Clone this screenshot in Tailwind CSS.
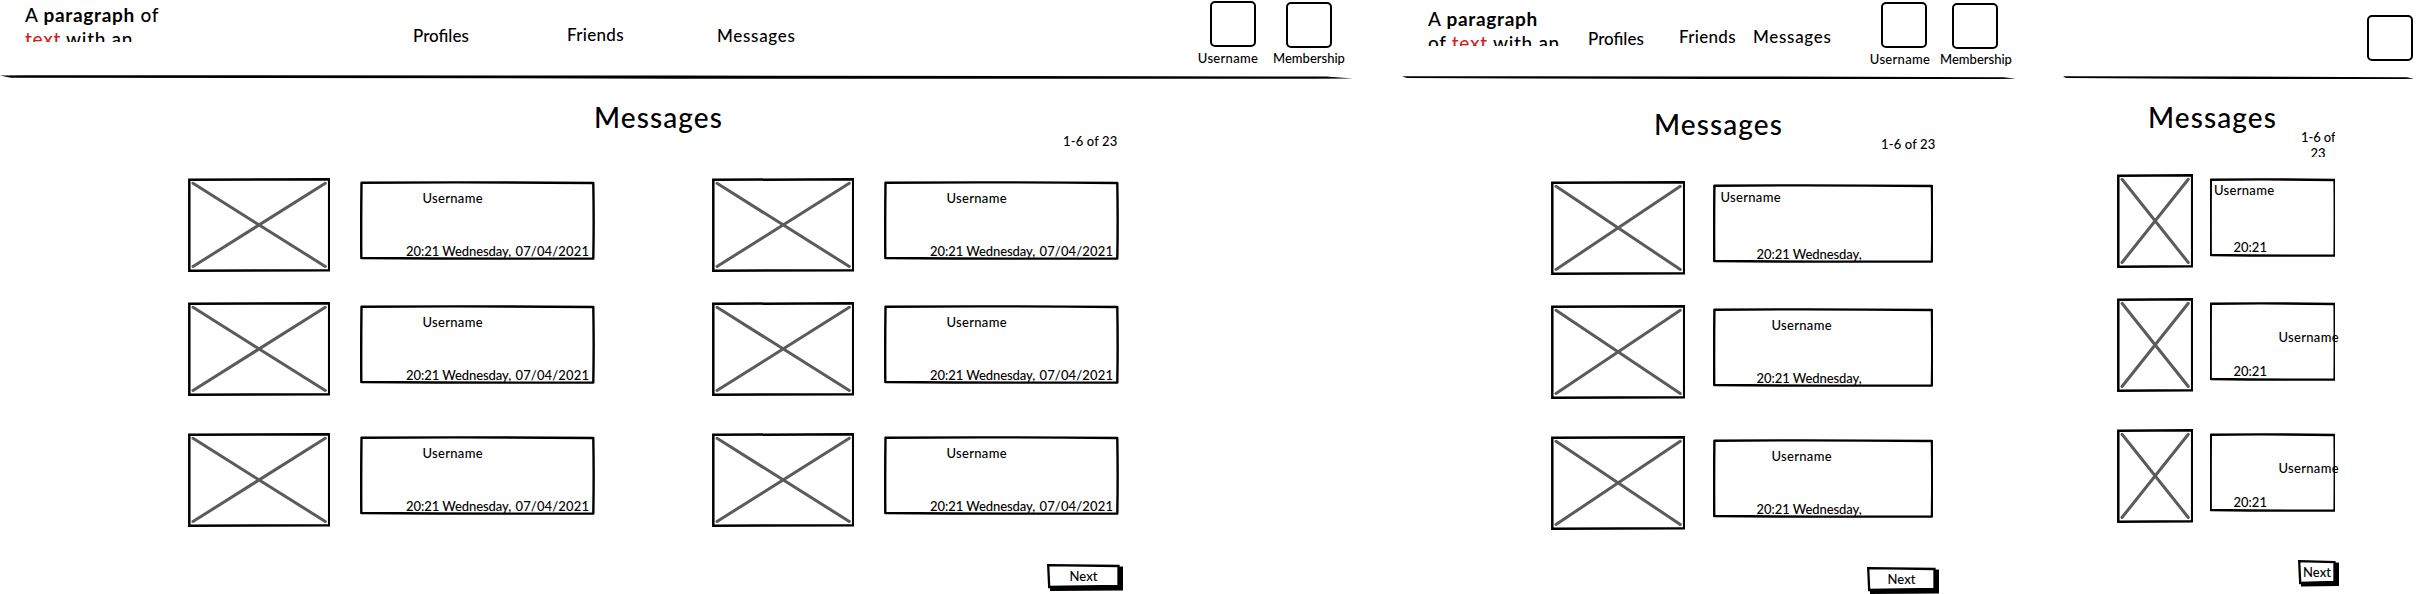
<!DOCTYPE html>
<html lang="en">
<head>
<meta charset="utf-8">
<title>Messages</title>
<script src="https://cdn.jsdelivr.net/npm/@tailwindcss/browser@4"></script>
</head>
<body class="w-[2427px] h-[594px] overflow-hidden bg-white text-black font-['Lato',sans-serif] font-medium whitespace-nowrap text-[13px] leading-4">
<svg class="hidden">
  <symbol id="img-lg" viewBox="0 0 142.5 94"><path d="M1.300 1.800L141.200 1.300V92.200L1.300 92.700Z" fill="#fff" stroke="#000" stroke-width="2.500"/><path d="M5 5.300L137.300 88.500M137.300 5.300L5 88.500" stroke="#5b5b5b" stroke-width="3" stroke-linecap="round"/></symbol>
  <symbol id="img-md" viewBox="0 0 134.500 94"><path d="M1.300 1.800L133.200 1.300V92.200L1.300 92.700Z" fill="#fff" stroke="#000" stroke-width="2.500"/><path d="M5 5.300L129.300 88.500M129.300 5.300L5 88.500" stroke="#5b5b5b" stroke-width="3" stroke-linecap="round"/></symbol>
  <symbol id="img-sm" viewBox="0 0 76.500 94"><path d="M1.300 1.800L75.200 1.300V92.200L1.300 92.700Z" fill="#fff" stroke="#000" stroke-width="2.500"/><path d="M5 5.300L71.300 88.500M71.300 5.300L5 88.500" stroke="#5b5b5b" stroke-width="3" stroke-linecap="round"/></symbol>
  <symbol id="box" viewBox="0 0 235 79" preserveAspectRatio="none"><path vector-effect="non-scaling-stroke" d="M1.500 1.700Q110 .9 233.300 2Q234 40 233.300 77.500Q120 78 1.300 77Q1 40 1.500 1.700Z" fill="none" stroke="#000" stroke-width="2.400" stroke-linejoin="round"/></symbol>
  <symbol id="rule" viewBox="0 0 1000 4" preserveAspectRatio="none"><path d="M0 .3L20 .2L500 .4L980 1.200L1000 2.800L970 2.900L500 2.900L8 2.100Z"/></symbol>
</svg>
<div class="flex items-start">

  <!-- Desktop -->
  <section class="w-[1402px] shrink-0">
    <header>
      <div class="flex items-start h-[75px]">
        <p class="ml-[25px] mt-[3px] w-[150px] h-[39px] overflow-hidden text-[19px] leading-6 tracking-[0.700px]">A <b>paragraph</b> of<br><span class="text-[#d32020]">text</span> with an</p>
        <nav class="flex text-[17px] leading-5">
          <a class="ml-[238px] mt-[26px] w-[58px]">Profiles</a>
          <a class="ml-[96px] mt-[25px] w-[58px] tracking-[0.300px]">Friends</a>
          <a class="ml-[92px] mt-[26px] w-[80px] tracking-[0.700px]">Messages</a>
        </nav>
        <div class="ml-[399px] mt-px w-[64px] flex flex-col items-center"><div class="ml-[9px] size-[46px] border-2 rounded-[5px]"></div><span class="mt-[3px] tracking-[0.300px]">Username</span></div>
        <div class="ml-[11px] mt-[2px] w-[76px] flex flex-col items-center"><div class="size-[46px] border-2 rounded-[5px]"></div><span class="mt-[2px]">Membership</span></div>
      </div>
      <svg class="w-[1353px] h-[5px]"><use href="#rule"/></svg>
    </header>
    <div class="flex items-start h-[98px]">
      <h1 class="ml-[594px] mt-[21px] w-[131px] text-[28px] leading-8 tracking-[1.100px]">Messages</h1>
      <span class="ml-[338px] mt-[53px] tracking-[0.150px]">1-6 of 23</span>
    </div>
    <div class="ml-[187.500px] grid grid-cols-[524px_524px] grid-rows-[124px_131px_94px]">
      <article class="flex items-start"><svg class="w-[142.500px] h-[94px]"><use href="#img-lg"/></svg><div class="relative ml-[29.500px] mt-[3px] w-[235px] h-[79px] flex flex-col"><svg class="absolute inset-0 size-full"><use href="#box"/></svg><span class="ml-[63px] mt-[9px] tracking-[0.300px]">Username</span><span class="ml-[46.500px] mt-[37px] tracking-[-0.060px]">20:21 Wednesday, <span class="ml-px tracking-[0.150px]">07/04/2021</span></span></div></article>
      <article class="flex items-start"><svg class="w-[142.500px] h-[94px]"><use href="#img-lg"/></svg><div class="relative ml-[29.500px] mt-[3px] w-[235px] h-[79px] flex flex-col"><svg class="absolute inset-0 size-full"><use href="#box"/></svg><span class="ml-[63px] mt-[9px] tracking-[0.300px]">Username</span><span class="ml-[46.500px] mt-[37px] tracking-[-0.060px]">20:21 Wednesday, <span class="ml-px tracking-[0.150px]">07/04/2021</span></span></div></article>
      <article class="flex items-start"><svg class="w-[142.500px] h-[94px]"><use href="#img-lg"/></svg><div class="relative ml-[29.500px] mt-[3px] w-[235px] h-[79px] flex flex-col"><svg class="absolute inset-0 size-full"><use href="#box"/></svg><span class="ml-[63px] mt-[9px] tracking-[0.300px]">Username</span><span class="ml-[46.500px] mt-[37px] tracking-[-0.060px]">20:21 Wednesday, <span class="ml-px tracking-[0.150px]">07/04/2021</span></span></div></article>
      <article class="flex items-start"><svg class="w-[142.500px] h-[94px]"><use href="#img-lg"/></svg><div class="relative ml-[29.500px] mt-[3px] w-[235px] h-[79px] flex flex-col"><svg class="absolute inset-0 size-full"><use href="#box"/></svg><span class="ml-[63px] mt-[9px] tracking-[0.300px]">Username</span><span class="ml-[46.500px] mt-[37px] tracking-[-0.060px]">20:21 Wednesday, <span class="ml-px tracking-[0.150px]">07/04/2021</span></span></div></article>
      <article class="flex items-start"><svg class="w-[142.500px] h-[94px]"><use href="#img-lg"/></svg><div class="relative ml-[29.500px] mt-[3px] w-[235px] h-[79px] flex flex-col"><svg class="absolute inset-0 size-full"><use href="#box"/></svg><span class="ml-[63px] mt-[9px] tracking-[0.300px]">Username</span><span class="ml-[46.500px] mt-[37px] tracking-[-0.060px]">20:21 Wednesday, <span class="ml-px tracking-[0.150px]">07/04/2021</span></span></div></article>
      <article class="flex items-start"><svg class="w-[142.500px] h-[94px]"><use href="#img-lg"/></svg><div class="relative ml-[29.500px] mt-[3px] w-[235px] h-[79px] flex flex-col"><svg class="absolute inset-0 size-full"><use href="#box"/></svg><span class="ml-[63px] mt-[9px] tracking-[0.300px]">Username</span><span class="ml-[46.500px] mt-[37px] tracking-[-0.060px]">20:21 Wednesday, <span class="ml-px tracking-[0.150px]">07/04/2021</span></span></div></article>
    </div>
    <button class="relative block ml-[1047px] mt-[37px] w-[76px] h-[27px] pr-[3px] pb-[3px] text-center"><svg class="absolute inset-0" width="76" height="27"><path d="M3 4L76 2.500V26.500L3 27Z"/><path d="M1.200 1.200L71.500 2V22L2.200 23Z" fill="#fff" stroke="#000" stroke-width="2.300"/></svg><span class="relative">Next</span></button>
  </section>

  <!-- Tablet -->
  <section class="w-[661px] shrink-0">
    <header>
      <div class="flex items-start h-[76px]">
        <p class="ml-[26px] mt-[7px] w-[135px] h-[39px] overflow-hidden text-[19px] leading-6 tracking-[0.700px]">A <b>paragraph</b><br>of <span class="text-[#d32020]">text</span> with an</p>
        <nav class="flex text-[17px] leading-5">
          <a class="ml-[25px] mt-[29px] w-[58px]">Profiles</a>
          <a class="ml-[33px] mt-[27px] w-[58px] tracking-[0.300px]">Friends</a>
          <a class="ml-[16px] mt-[27px] w-[80px] tracking-[0.700px]">Messages</a>
        </nav>
        <div class="ml-[36px] mt-[2px] w-[62px] flex flex-col items-center"><div class="ml-[7px] size-[46px] border-2 rounded-[5px]"></div><span class="mt-[3px] tracking-[0.300px]">Username</span></div>
        <div class="ml-[9px] mt-[3px] w-[72px] flex flex-col items-center"><div class="mr-[2px] size-[46px] border-2 rounded-[5px]"></div><span class="mt-[2px]">Membership</span></div>
      </div>
      <svg class="w-[614px] h-[4px]"><use href="#rule"/></svg>
    </header>
    <div class="flex items-start h-[101px]">
      <h1 class="ml-[252px] mt-[28px] w-[131px] text-[28px] leading-8 tracking-[1.100px]">Messages</h1>
      <span class="ml-[96px] mt-[56px] tracking-[0.150px]">1-6 of 23</span>
    </div>
    <div class="ml-[148.500px] grid grid-rows-[124px_131px_94px]">
      <article class="flex items-start"><svg class="w-[134.500px] h-[94px]"><use href="#img-md"/></svg><div class="relative ml-[27.500px] mt-[3px] w-[220.500px] h-[79px] flex flex-col"><svg class="absolute inset-0 size-full"><use href="#box"/></svg><span class="ml-[8px] mt-[5px] tracking-[0.300px]">Username</span><span class="ml-[44px] mt-[41px] tracking-[-0.060px]">20:21 Wednesday,</span></div></article>
      <article class="flex items-start"><svg class="w-[134.500px] h-[94px]"><use href="#img-md"/></svg><div class="relative ml-[27.500px] mt-[3px] w-[220.500px] h-[79px] flex flex-col"><svg class="absolute inset-0 size-full"><use href="#box"/></svg><span class="ml-[59px] mt-[9px] tracking-[0.300px]">Username</span><span class="ml-[44px] mt-[37px] tracking-[-0.060px]">20:21 Wednesday,</span></div></article>
      <article class="flex items-start"><svg class="w-[134.500px] h-[94px]"><use href="#img-md"/></svg><div class="relative ml-[27.500px] mt-[3px] w-[220.500px] h-[79px] flex flex-col"><svg class="absolute inset-0 size-full"><use href="#box"/></svg><span class="ml-[59px] mt-[9px] tracking-[0.300px]">Username</span><span class="ml-[44px] mt-[37px] tracking-[-0.060px]">20:21 Wednesday,</span></div></article>
    </div>
    <button class="relative block ml-[465px] mt-[37px] w-[72px] h-[27px] pr-[3px] pb-[3px] text-center"><svg class="absolute inset-0" width="72" height="27"><path d="M3 4L72 2.500V26.500L3 27Z"/><path d="M1.200 1.200L67.500 2V22L2.200 23Z" fill="#fff" stroke="#000" stroke-width="2.300"/></svg><span class="relative">Next</span></button>
  </section>

  <!-- Mobile -->
  <section class="w-[364px] shrink-0">
    <header>
      <div class="flex items-start h-[76px]"><div class="ml-[304px] mt-[15px] size-[46px] border-2 rounded-[5px]"></div></div>
      <svg class="w-[351px] h-[4px]"><use href="#rule"/></svg>
    </header>
    <div class="flex items-start h-[94px]">
      <h1 class="ml-[85px] mt-[21px] w-[131px] text-[28px] leading-8 tracking-[1.100px]">Messages</h1>
      <span class="ml-[22px] mt-[49px] w-[34px] h-[28px] overflow-hidden leading-4 tracking-[-0.100px] text-center">1-6 of<br>23</span>
    </div>
    <div class="ml-[53.500px] grid grid-rows-[124px_131px_94px]">
      <article class="flex items-start"><svg class="w-[76.500px] h-[94px]"><use href="#img-sm"/></svg><div class="relative ml-[16.500px] mt-[3.500px] w-[125.500px] h-[79px] flex flex-col"><svg class="absolute inset-0 size-full"><use href="#box"/></svg><span class="ml-[4.500px] mt-[4.500px] tracking-[0.300px]">Username</span><span class="ml-[24px] mt-[41px]">20:21</span></div></article>
      <article class="flex items-start"><svg class="w-[76.500px] h-[94px]"><use href="#img-sm"/></svg><div class="relative ml-[16.500px] mt-[3.500px] w-[125.500px] h-[79px] flex flex-col"><svg class="absolute inset-0 size-full"><use href="#box"/></svg><span class="ml-[69px] mt-[27.500px] tracking-[0.300px]">Username</span><span class="ml-[24px] mt-[18px]">20:21</span></div></article>
      <article class="flex items-start"><svg class="w-[76.500px] h-[94px]"><use href="#img-sm"/></svg><div class="relative ml-[16.500px] mt-[3.500px] w-[125.500px] h-[79px] flex flex-col"><svg class="absolute inset-0 size-full"><use href="#box"/></svg><span class="ml-[69px] mt-[27.500px] tracking-[0.300px]">Username</span><span class="ml-[24px] mt-[18px]">20:21</span></div></article>
    </div>
    <button class="relative block ml-[235px] mt-[37px] w-[41px] h-[27px] pr-[3px] pb-[3px] text-center"><svg class="absolute inset-0" width="41" height="27"><path d="M3 4L41 2.500V26L3 26.500Z"/><path d="M1.200 1.200L36.500 2V22L2.200 23Z" fill="#fff" stroke="#000" stroke-width="2.300"/></svg><span class="relative">Next</span></button>
  </section>
</div>
</body>
</html>
